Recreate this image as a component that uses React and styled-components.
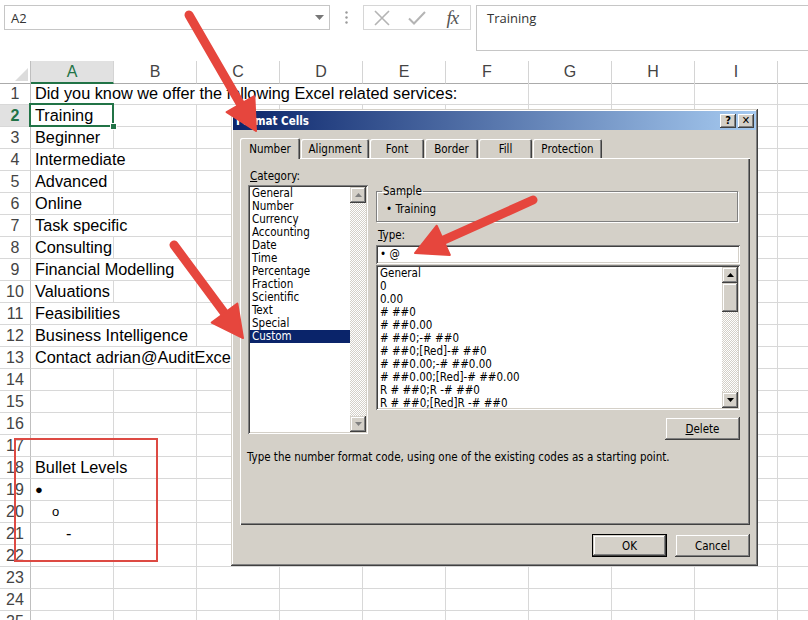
import React from 'react';
import styled, { createGlobalStyle } from 'styled-components';

const GlobalStyle = createGlobalStyle`
  html, body { margin: 0; padding: 0; background: #fff; }
`;

const UI_FONT = `"DejaVu Sans Condensed", "DejaVu Sans", Tahoma, sans-serif`;

const Root = styled.div`
  position: relative;
  width: 808px;
  height: 620px;
  overflow: hidden;
  background: #fff;
  font-family: "Liberation Sans", Arial, sans-serif;
`;

/* ---------- formula bar ---------- */
const FormulaBar = styled.div`
  display: flex;
  align-items: flex-start;
  height: 61px;
  padding-top: 5px;
  box-sizing: border-box;
  font-family: "Open Sans", "Liberation Sans", sans-serif;
  font-size: 13px;
  color: #333;
`;

const NameBox = styled.div`
  margin-left: 4px;
  width: 326px;
  height: 25px;
  box-sizing: border-box;
  border: 1px solid #c6c6c6;
  display: flex;
  align-items: center;
  justify-content: space-between;
  padding: 0 5px 0 6px;
`;

const Dots = styled.div`
  width: 33px;
  height: 25px;
  display: flex;
  align-items: center;
  justify-content: center;
`;

const FxGroup = styled.div`
  width: 108px;
  height: 25px;
  box-sizing: border-box;
  border: 1px solid #d6d6d6;
  display: flex;
  align-items: center;
`;

const FxSlot = styled.div`
  width: 36px;
  display: flex;
  justify-content: center;
  align-items: center;
`;

const FxText = styled.span`
  font-family: "Liberation Serif", "Times New Roman", serif;
  font-style: italic;
  font-size: 19px;
  color: #555;
  letter-spacing: -1px;
`;

const FormulaInput = styled.div`
  margin-left: 5px;
  flex: 1;
  height: 46px;
  box-sizing: border-box;
  border: 1px solid #c6c6c6;
  border-right: none;
  padding: 3px 10px;
`;

/* ---------- sheet ---------- */
const SheetRow = styled.div`
  display: grid;
  grid-template-columns: 31px repeat(10, 83px);
  height: 22px;
`;

const Corner = styled.div`
  position: relative;
  box-sizing: border-box;
  border-right: 1px solid #bfbfbf;
  border-bottom: 1px solid #ababab;
  &::after {
    content: '';
    position: absolute;
    right: 2px;
    bottom: 2px;
    border-left: 13px solid transparent;
    border-bottom: 13px solid #dcdcdc;
  }
`;

const ColHead = styled.div`
  box-sizing: border-box;
  border-right: 1px solid #d4d4d4;
  border-bottom: ${p => (p.$active ? '2px solid #217346' : '1px solid #ababab')};
  background: ${p => (p.$active ? '#e1e1e1' : '#fff')};
  color: ${p => (p.$active ? '#217346' : '#444')};
  font-size: 16px;
  line-height: 21px;
  text-align: center;
`;

const RowNum = styled.div`
  box-sizing: border-box;
  border-right: 1px solid #bfbfbf;
  border-bottom: 1px solid #d8d8d8;
  background: ${p => (p.$active ? '#e1e1e1' : '#fff')};
  color: ${p => (p.$active ? '#217346' : '#444')};
  font-weight: ${p => (p.$active ? 700 : 400)};
  font-size: 16px;
  line-height: 21px;
  text-align: center;
`;

const Cell = styled.div`
  position: relative;
  grid-column: span ${p => p.$span || 1};
  box-sizing: border-box;
  border-right: 1px solid #d8d8d8;
  border-bottom: 1px solid #d8d8d8;
  padding-left: ${p => 4 + (p.$indent || 0)}px;
  font-size: ${p => p.$size || 16.3}px;
  line-height: 21px;
  color: #000;
  white-space: nowrap;

  ${p => p.$selected && `
    &::after {
      content: '';
      position: absolute;
      left: -2px; top: -2px; right: -1px; bottom: -1px;
      border: 2px solid #217346;
    }
    &::before {
      content: '';
      position: absolute;
      right: -4px; bottom: -4px;
      width: 5px; height: 5px;
      background: #217346;
      border: 1px solid #fff;
      z-index: 1;
    }
  `}
`;

const HighlightBox = styled.div`
  position: absolute;
  left: 14px;
  top: 438px;
  width: 144px;
  height: 124px;
  box-sizing: border-box;
  border: 2px solid #dd4a43;
`;

/* ---------- dialog ---------- */
const Dialog = styled.div`
  position: absolute;
  left: 231px;
  top: 109px;
  width: 527px;
  height: 457px;
  box-sizing: border-box;
  padding: 2px;
  background: #d4d0c8;
  box-shadow: inset -1px -1px #404040, inset 1px 1px #d4d0c8,
    inset -2px -2px #808080, inset 2px 2px #fff;
  font-family: ${UI_FONT};
  font-size: 11.5px;
  color: #000;
`;

const TitleBar = styled.div`
  height: 19px;
  display: flex;
  align-items: center;
  justify-content: space-between;
  padding: 0 2px 0 3px;
  background: linear-gradient(to right, #0a246a, #a6caf0);
  color: #fff;
  font-weight: bold;
`;

const TitleButtons = styled.div`
  display: flex;
  gap: 2px;
`;

const TitleButton = styled.div`
  width: 16px;
  height: 14px;
  box-sizing: border-box;
  background: #d4d0c8;
  box-shadow: inset -1px -1px #404040, inset 1px 1px #fff,
    inset -2px -2px #808080;
  color: #000;
  font-weight: bold;
  font-size: 11px;
  line-height: 14px;
  text-align: center;
`;

const DialogBody = styled.div`
  padding: 7px 7px 0 7px;
`;

const TabStrip = styled.div`
  display: flex;
  align-items: flex-end;
  height: 21px;
`;

const Tab = styled.div`
  width: ${p => p.$w}px;
  height: ${p => (p.$active ? 21 : 19)}px;
  margin-left: ${p => (p.$first ? 0 : 1)}px;
  box-sizing: border-box;
  position: relative;
  z-index: ${p => (p.$active ? 1 : 0)};
  margin-bottom: ${p => (p.$active ? -1 : 0)}px;
  background: #d4d0c8;
  border-top-left-radius: 2px;
  border-top-right-radius: 2px;
  box-shadow: inset 1px 1px #fff, inset -1px 0 #404040, inset -2px 0 #808080;
  display: flex;
  align-items: center;
  justify-content: center;
  padding-top: ${p => (p.$active ? 0 : 1)}px;
`;

const Panel = styled.div`
  width: 510px;
  height: 367px;
  box-sizing: border-box;
  padding: 12px 10px 0 8px;
  box-shadow: inset 1px 1px #fff, inset -1px -1px #404040, inset -2px -2px #808080;
`;

const PanelGrid = styled.div`
  display: grid;
  grid-template-columns: 120px 364px;
  column-gap: 8px;
`;

const Column = styled.div`
  display: flex;
  flex-direction: column;
  padding-top: ${p => p.$offset || 0}px;
`;

const Label = styled.div`
  height: ${p => p.$h || 15}px;
  line-height: 13px;
  padding-left: ${p => p.$pl || 2}px;
  u { text-decoration: underline; }
`;

const Sunken = styled.div`
  position: relative;
  box-sizing: border-box;
  background: #fff;
  box-shadow: inset 1px 1px #808080, inset -1px -1px #fff,
    inset 2px 2px #404040, inset -2px -2px #d4d0c8;
`;

const ListBox = styled(Sunken)`
  height: ${p => p.$h}px;
  padding: 2px;
  display: flex;
`;

const ListItems = styled.div`
  flex: 1;
`;

const ListItem = styled.div`
  height: 13px;
  line-height: 13px;
  padding-left: 2px;
  white-space: nowrap;
  background: ${p => (p.$selected ? '#0a246a' : 'transparent')};
  color: ${p => (p.$selected ? '#fff' : '#000')};
`;

const ScrollBar = styled.div`
  width: 16px;
  display: flex;
  flex-direction: column;
  background: repeating-conic-gradient(#fff 0 25%, #d4d0c8 0 50%) 0 0 / 2px 2px;
`;

const Raised = styled.div`
  box-sizing: border-box;
  background: #d4d0c8;
  box-shadow: inset -1px -1px #404040, inset 1px 1px #d4d0c8,
    inset -2px -2px #808080, inset 2px 2px #fff;
`;

const ScrollButton = styled(Raised)`
  height: 16px;
  display: flex;
  align-items: center;
  justify-content: center;
`;

const ScrollThumb = styled(Raised)`
  height: ${p => p.$h}px;
`;

const ScrollTrack = styled.div`
  flex: 1;
`;

const SampleGroup = styled.fieldset`
  margin: 0 2px 0 0;
  padding: 0 7px 0 7px;
  height: 37px;
  box-sizing: border-box;
  border: 1px solid #808080;
  box-shadow: inset 1px 1px #fff, 1px 1px #fff;
  legend {
    padding: 0 1px;
    margin-left: -2px;
    line-height: 13px;
  }
`;

const SampleValue = styled.div`
  margin-top: 5px;
  padding-left: 2px;
  line-height: 13px;
`;

const TypeInput = styled(Sunken)`
  height: 19px;
  padding: 3px 4px;
  line-height: 13px;
`;

const Spacer = styled.div`
  height: ${p => p.$h}px;
`;

const PushButton = styled(Raised)`
  width: 75px;
  height: 23px;
  display: flex;
  align-items: center;
  justify-content: center;
  align-self: ${p => p.$align || 'auto'};
  ${p => p.$default && `
    border: 1px solid #000;
  `}
  u { text-decoration: underline; }
`;

const Description = styled.div`
  margin-top: 11px;
  margin-left: -1px;
  line-height: 13px;
`;

const Footer = styled.div`
  display: flex;
  justify-content: flex-end;
  gap: 8px;
  padding: 9px 0 0 0;
  width: 510px;
`;

const Arrows = styled.svg`
  position: absolute;
  left: 0;
  top: 0;
  pointer-events: none;
`;

/* ---------- icons ---------- */
const CaretDown = () => (
  <svg width="9" height="5" viewBox="0 0 9 5"><path d="M0 0h9L4.5 5z" fill="#777" /></svg>
);
const VDots = () => (
  <svg width="3" height="13" viewBox="0 0 3 13">
    <circle cx="1.5" cy="1.5" r="1.2" fill="#9a9a9a" />
    <circle cx="1.5" cy="6.5" r="1.2" fill="#9a9a9a" />
    <circle cx="1.5" cy="11.5" r="1.2" fill="#9a9a9a" />
  </svg>
);
const CancelIcon = () => (
  <svg width="18" height="18" viewBox="0 0 18 18">
    <path d="M2 2L16 16M16 2L2 16" stroke="#b4b4b4" strokeWidth="1.6" fill="none" />
  </svg>
);
const CheckIcon = () => (
  <svg width="20" height="16" viewBox="0 0 20 16">
    <path d="M2 8.5L7 13.5L18 2" stroke="#b4b4b4" strokeWidth="2" fill="none" />
  </svg>
);
const UpArrow = ({ color = '#000' }) => (
  <svg width="7" height="4" viewBox="0 0 7 4"><path d="M0 4h7L3.5 0z" fill={color} /></svg>
);
const DownArrow = ({ color = '#000' }) => (
  <svg width="7" height="4" viewBox="0 0 7 4"><path d="M0 0h7L3.5 4z" fill={color} /></svg>
);

const Arrow = ({ tail, tip, len = 31, half = 16 }) => {
  const dx = tip[0] - tail[0];
  const dy = tip[1] - tail[1];
  const d = Math.hypot(dx, dy);
  const ux = dx / d, uy = dy / d;
  const bx = tip[0] - ux * len, by = tip[1] - uy * len;
  const nx = -uy, ny = ux;
  const pts = [
    [bx + nx * half, by + ny * half],
    tip,
    [bx - nx * half, by - ny * half],
  ].map(p => p.join(',')).join(' ');
  return (
    <g>
      <line x1={tail[0]} y1={tail[1]} x2={bx + ux * 4} y2={by + uy * 4}
        stroke="#e6463d" strokeWidth="9" strokeLinecap="round" />
      <polygon points={pts} fill="#e6463d" strokeLinejoin="round" stroke="#e6463d" strokeWidth="2" />
    </g>
  );
};

/* ---------- data ---------- */
const COLS = ['A', 'B', 'C', 'D', 'E', 'F', 'G', 'H', 'I', ''];

const CELLS = {
  1: { text: 'Did you know we offer the following Excel related services:', span: 6 },
  2: { text: 'Training', selected: true },
  3: { text: 'Beginner' },
  4: { text: 'Intermediate', span: 2 },
  5: { text: 'Advanced' },
  6: { text: 'Online' },
  7: { text: 'Task specific', span: 2 },
  8: { text: 'Consulting' },
  9: { text: 'Financial Modelling', span: 2 },
  10: { text: 'Valuations' },
  11: { text: 'Feasibilities', span: 2 },
  12: { text: 'Business Intelligence', span: 2 },
  13: { text: 'Contact adrian@AuditExcel.co.za', span: 4 },
  18: { text: 'Bullet Levels', span: 2 },
  19: { text: '●', size: 13 },
  20: { text: 'o', indent: 17, size: 13 },
  21: { text: '-', indent: 31 },
};

const CATEGORIES = ['General', 'Number', 'Currency', 'Accounting', 'Date', 'Time',
  'Percentage', 'Fraction', 'Scientific', 'Text', 'Special', 'Custom'];

const TYPES = ['General', '0', '0.00', '# ##0', '# ##0.00', '# ##0;-# ##0',
  '# ##0;[Red]-# ##0', '# ##0.00;-# ##0.00', '# ##0.00;[Red]-# ##0.00',
  'R # ##0;R -# ##0', 'R # ##0;[Red]R -# ##0'];

const TABS = [
  { label: 'Number', w: 60, active: true },
  { label: 'Alignment', w: 68 },
  { label: 'Font', w: 54 },
  { label: 'Border', w: 53 },
  { label: 'Fill', w: 53 },
  { label: 'Protection', w: 69 },
];

const SheetLine = ({ n }) => {
  const c = CELLS[n];
  const span = c ? c.span || 1 : 0;
  const rest = COLS.length - span;
  return (
    <SheetRow>
      <RowNum $active={n === 2}>{n}</RowNum>
      {c && (
        <Cell $span={span} $indent={c.indent} $size={c.size} $selected={c.selected}>{c.text}</Cell>
      )}
      {Array.from({ length: rest }).map((_, i) => <Cell key={i} />)}
    </SheetRow>
  );
};

export default function App() {
  return (
    <Root>
      <GlobalStyle />
      <FormulaBar>
        <NameBox>
          <span>A2</span>
          <CaretDown />
        </NameBox>
        <Dots><VDots /></Dots>
        <FxGroup>
          <FxSlot><CancelIcon /></FxSlot>
          <FxSlot><CheckIcon /></FxSlot>
          <FxSlot><FxText>fx</FxText></FxSlot>
        </FxGroup>
        <FormulaInput>Training</FormulaInput>
      </FormulaBar>

      <SheetRow>
        <Corner />
        {COLS.map((c, i) => <ColHead key={i} $active={c === 'A'}>{c}</ColHead>)}
      </SheetRow>
      {Array.from({ length: 25 }).map((_, i) => <SheetLine key={i} n={i + 1} />)}

      <HighlightBox />

      <Dialog>
        <TitleBar>
          <span>Format Cells</span>
          <TitleButtons>
            <TitleButton>?</TitleButton>
            <TitleButton>✕</TitleButton>
          </TitleButtons>
        </TitleBar>
        <DialogBody>
          <TabStrip>
            {TABS.map((t, i) => (
              <Tab key={t.label} $w={t.w} $active={t.active} $first={i === 0}>{t.label}</Tab>
            ))}
          </TabStrip>
          <Panel>
            <PanelGrid>
              <Column>
                <Label><u>C</u>ategory:</Label>
                <ListBox $h={249}>
                  <ListItems>
                    {CATEGORIES.map(c => (
                      <ListItem key={c} $selected={c === 'Custom'}>{c}</ListItem>
                    ))}
                  </ListItems>
                  <ScrollBar>
                    <ScrollButton><UpArrow color="#808080" /></ScrollButton>
                    <ScrollTrack />
                    <ScrollButton><DownArrow color="#808080" /></ScrollButton>
                  </ScrollBar>
                </ListBox>
              </Column>
              <Column $offset={15}>
                <SampleGroup>
                  <legend>Sample</legend>
                  <SampleValue>• Training</SampleValue>
                </SampleGroup>
                <Spacer $h={7} />
                <Label $h={16}><u>T</u>ype:</Label>
                <TypeInput>• @</TypeInput>
                <Spacer $h={1} />
                <ListBox $h={145}>
                  <ListItems>
                    {TYPES.map(t => <ListItem key={t}>{t}</ListItem>)}
                  </ListItems>
                  <ScrollBar>
                    <ScrollButton><UpArrow /></ScrollButton>
                    <ScrollThumb $h={29} />
                    <ScrollTrack />
                    <ScrollButton><DownArrow /></ScrollButton>
                  </ScrollBar>
                </ListBox>
                <Spacer $h={7} />
                <PushButton $align="flex-end"><span><u>D</u>elete</span></PushButton>
              </Column>
            </PanelGrid>
            <Description>
              Type the number format code, using one of the existing codes as a starting point.
            </Description>
          </Panel>
          <Footer>
            <PushButton $default>OK</PushButton>
            <PushButton>Cancel</PushButton>
          </Footer>
        </DialogBody>
      </Dialog>

      <Arrows width="808" height="620" viewBox="0 0 808 620">
        <Arrow tail={[189, 15]} tip={[256, 131]} />
        <Arrow tail={[174, 245]} tip={[243, 338]} />
        <Arrow tail={[533, 200]} tip={[415, 253]} />
      </Arrows>
    </Root>
  );
}
